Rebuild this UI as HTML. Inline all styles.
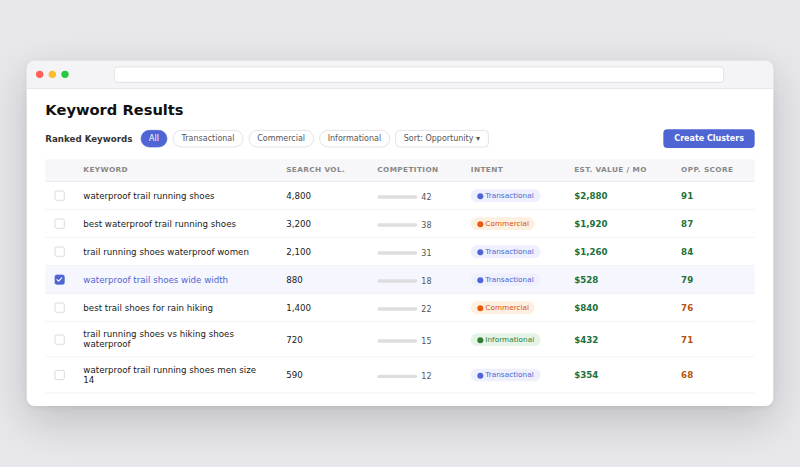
<!DOCTYPE html>
<html><head><meta charset="utf-8">
<style>
*{box-sizing:border-box;margin:0;padding:0}
html,body{width:800px;height:467px;overflow:hidden;background:#e8e8ec}
.stage{width:1200px;height:700px;transform:scale(.66667);transform-origin:0 0;background:#e8e8ec;font-family:"DejaVu Sans","Liberation Sans",sans-serif;color:#202020;position:relative}
.win{position:absolute;left:40px;top:91px;width:1120px;height:518px;background:#fff;border-radius:12px;overflow:hidden;box-shadow:0 22px 66px rgba(0,0,0,.18),0 2px 8px rgba(0,0,0,.05)}
.bar{height:41.6px;background:#f4f4f6;border-bottom:1px solid #dedee2;position:relative}
.dot{position:absolute;top:15px;width:11px;height:11px;border-radius:50%}
.url{position:absolute;left:130.5px;top:9px;width:915.5px;height:24px;background:#fff;border:1px solid #d6d6da;border-radius:6px}
h1{font-size:22px;font-weight:700;position:absolute;left:28px;top:62.1px;line-height:26px;color:#111}
.tools{position:absolute;left:28px;right:28px;top:103.5px;height:28px;display:flex;align-items:center}
.lbl{font-size:13px;font-weight:700;margin-right:12px;color:#333}
.pill{font-size:12px;height:26px;line-height:24px;padding:0 12px;border:1px solid #d4d4d9;border-radius:13px;background:#fff;color:#555;margin-right:8px;white-space:nowrap;position:relative;top:-.7px}
.pill.on{background:#4e65d3;border-color:#4e65d3;color:#fff}
.sort{border-radius:6px;padding:0 12px;height:26.6px;top:-.4px}
.btn{margin-left:auto;position:relative;top:-.5px;background:#4e65d3;color:#fff;font-weight:700;font-size:12px;height:27.5px;line-height:28.5px;padding:0 16px;border-radius:6px;white-space:nowrap}
.tbl{position:absolute;left:28px;top:148.2px;width:1064px;font-size:13px}
.r{display:flex;align-items:center;height:42px;border-bottom:1px solid #eeeef1}
.r>div{flex:none;padding:0 14px;line-height:15px;display:flex;align-items:center}
.r>div.kw{display:block}
.r>div:nth-child(1){width:43px}
.r>div:nth-child(2){width:304.25px}
.r>div:nth-child(3){width:136.75px}
.r>div:nth-child(4){width:140.25px}
.r>div:nth-child(5){width:155px}
.r>div:nth-child(6){width:160.4px}
.r>div:nth-child(7){flex:1}
.r.h{height:34px;background:#f7f7f9;border-bottom:1px solid #e6e6e9}
.r.h>div{font-size:11px;letter-spacing:.55px;color:#888;font-weight:700;white-space:nowrap;padding-bottom:2px}
.r.tall{height:53px}
.r.last{height:53.4px}
.r.sel{background:#f5f6fe}
.r.sel .kw{color:#4e65d3}
.cb{display:block;width:15px;height:15px;border:1.5px solid #cacacf;border-radius:3px;background:#fff;position:relative;top:.3px;left:-.5px}
.cb.on{background:#4e65d3;border-color:#4e65d3}
.bart{display:block;flex:none;width:60px;height:5px;border-radius:3px;background:#dedee1;margin-right:6px;position:relative;top:1.9px}
.num{color:#555;font-size:12px;line-height:14px;position:relative;top:2.5px}
.tag{display:flex;align-items:center;font-size:11px;height:19px;line-height:19px;padding:0 8.5px 0 9.5px;position:relative;top:.3px;border-radius:10px;white-space:nowrap}
.tag i{display:block;flex:none;width:9px;height:9px;border-radius:50%;margin-right:3.2px;position:relative;top:.6px}
.t{background:#eef0fd;color:#4e65d3;padding-right:9.9px}.t i{background:#4e65d3}
.c{background:#fdf0e0;color:#d9530e}.c i{background:#e8590c}
.i{background:#e6f4e7;color:#2e7d32;padding-right:9.9px}.i i{background:#2e7d32}
.val{color:#21703b;font-weight:700}
.g{color:#21703b;font-weight:700}
.o{color:#b5520e;font-weight:700}
</style></head><body>
<div class="stage">
<div class="win">
 <div class="bar">
  <span class="dot" style="left:14px;background:#ff5f57"></span>
  <span class="dot" style="left:33px;background:#febc2e"></span>
  <span class="dot" style="left:52px;background:#28c840"></span>
  <div class="url"></div>
 </div>
 <h1>Keyword Results</h1>
 <div class="tools">
  <span class="lbl">Ranked Keywords</span>
  <span class="pill on">All</span>
  <span class="pill">Transactional</span>
  <span class="pill">Commercial</span>
  <span class="pill">Informational</span>
  <span class="pill sort">Sort: Opportunity ▾</span>
  <span class="btn">Create Clusters</span>
 </div>
 <div class="tbl">
  
  <div class="r h"><div></div><div>KEYWORD</div><div>SEARCH VOL.</div><div>COMPETITION</div><div>INTENT</div><div>EST. VALUE / MO</div><div>OPP. SCORE</div></div>
  <div class="r"><div><span class="cb"></span></div><div class="kw">waterproof trail running shoes</div><div>4,800</div><div><span class="bart"></span><span class="num">42</span></div><div><span class="tag t"><i></i>Transactional</span></div><div class="val">$2,880</div><div class="g">91</div></div>
  <div class="r"><div><span class="cb"></span></div><div class="kw">best waterproof trail running shoes</div><div>3,200</div><div><span class="bart"></span><span class="num">38</span></div><div><span class="tag c"><i></i>Commercial</span></div><div class="val">$1,920</div><div class="g">87</div></div>
  <div class="r"><div><span class="cb"></span></div><div class="kw">trail running shoes waterproof women</div><div>2,100</div><div><span class="bart"></span><span class="num">31</span></div><div><span class="tag t"><i></i>Transactional</span></div><div class="val">$1,260</div><div class="g">84</div></div>
  <div class="r sel"><div><span class="cb on"><svg width="12" height="12" viewBox="0 0 12 12" style="position:absolute;left:0;top:0"><path d="M2.4 6.4 L4.9 8.8 L9.7 3.9" fill="none" stroke="#fff" stroke-width="1.6" stroke-linecap="round" stroke-linejoin="round"/></svg></span></div><div class="kw">waterproof trail shoes wide width</div><div>880</div><div><span class="bart"></span><span class="num">18</span></div><div><span class="tag t"><i></i>Transactional</span></div><div class="val">$528</div><div class="g">79</div></div>
  <div class="r"><div><span class="cb"></span></div><div class="kw">best trail shoes for rain hiking</div><div>1,400</div><div><span class="bart"></span><span class="num">22</span></div><div><span class="tag c"><i></i>Commercial</span></div><div class="val">$840</div><div class="o">76</div></div>
  <div class="r tall"><div><span class="cb"></span></div><div class="kw">trail running shoes vs hiking shoes waterproof</div><div>720</div><div><span class="bart"></span><span class="num">15</span></div><div><span class="tag i"><i></i>Informational</span></div><div class="val">$432</div><div class="o">71</div></div>
  <div class="r tall last"><div><span class="cb"></span></div><div class="kw">waterproof trail running shoes men size 14</div><div>590</div><div><span class="bart"></span><span class="num">12</span></div><div><span class="tag t"><i></i>Transactional</span></div><div class="val">$354</div><div class="g o">68</div></div>
 </div>
</div>
</div>
</body></html>
